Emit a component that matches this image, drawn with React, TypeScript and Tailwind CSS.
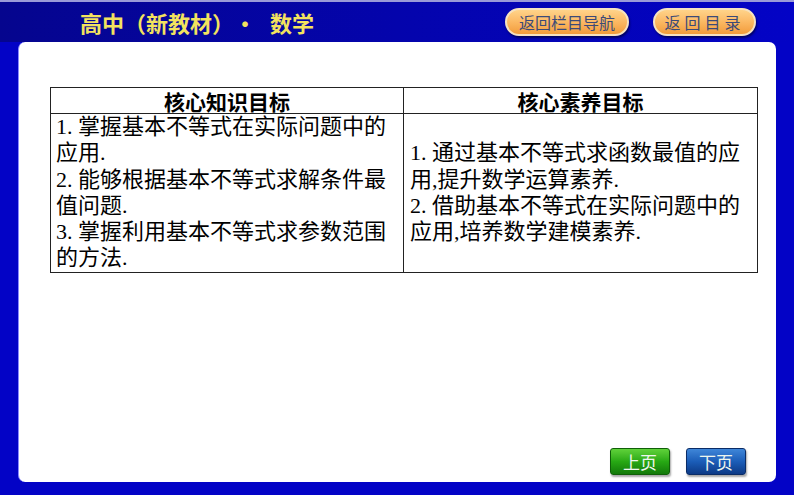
import React from "react";

const cjk = "'Noto Sans CJK SC', 'Noto Sans', sans-serif";
const serif = "'Liberation Serif', 'Noto Sans CJK SC', serif";

function PillButton({ label, w, track }: { label: string; w: string; track: string }) {
  return (
    <div
      className={`${w} ${track} flex h-[28px] items-center justify-center rounded-full border-2 border-[#f6e2c0] bg-gradient-to-b from-[#ffd38a] via-[#fbb862] to-[#f29c3a] text-[16px] text-[#3c4a78] shadow-[1px_2px_2px_rgba(0,0,40,0.6)]`}
      style={{ fontFamily: cjk }}
    >
      {label}
    </div>
  );
}

function PageButton({ label, tone }: { label: string; tone: "green" | "blue" }) {
  const cls =
    tone === "green"
      ? "bg-gradient-to-b from-[#5fd23a] via-[#27a914] to-[#137a0a] border-[#0f5f08]"
      : "bg-gradient-to-b from-[#3f86d8] via-[#1b5db8] to-[#0d3a86] border-[#0a2c66]";
  return (
    <div
      className={`${cls} flex h-[27px] w-[60px] items-center justify-center rounded-[3px] border text-[17px] text-[#eef6ee] shadow-[1px_2px_2px_rgba(0,0,0,0.35)]`}
      style={{ fontFamily: cjk }}
    >
      {label}
    </div>
  );
}

const leftLines = [
  "1. 掌握基本不等式在实际问题中的",
  "应用.",
  "2. 能够根据基本不等式求解条件最",
  "值问题.",
  "3. 掌握利用基本不等式求参数范围",
  "的方法.",
];

const rightLines = [
  "1. 通过基本不等式求函数最值的应",
  "用,提升数学运算素养.",
  "2. 借助基本不等式在实际问题中的",
  "应用,培养数学建模素养.",
];

export default function App() {
  return (
    <div className="flex h-[495px] w-[794px] flex-col overflow-hidden border-t-2 border-[#9a9ad8] bg-[#0303c6]">
      <div className="flex h-[40px] items-center bg-gradient-to-r from-[#05058e] via-[#0404ac] to-[#0303c6]">
        <div
          className="ml-[80px] flex items-center text-[22px] font-bold text-[#f3e35e]"
          style={{ fontFamily: cjk }}
        >
          <span>高中（新教材）</span>
          <span className="mr-[14px]">·</span>
          <span>数学</span>
        </div>
        <div className="ml-auto mr-[38px] flex items-center gap-[24px]">
          <PillButton label="返回栏目导航" w="w-[124px]" track="tracking-[0px]" />
          <PillButton label="返回目录" w="w-[103px]" track="tracking-[4px]" />
        </div>
      </div>

      <div className="mx-[18px] mb-[13px] flex flex-1 flex-col rounded-[7px] border-l border-[#8a8aff] bg-white">
        <div className="ml-[31px] mt-[45px] w-[708px]">
          <table className="w-full border-collapse border border-[#222] text-[22px] text-black">
            <thead>
              <tr className="h-[26px]">
                <th
                  className="w-[353px] border border-[#222] p-0 pt-[1px] text-center text-[21px] font-bold leading-[24px]"
                  style={{ fontFamily: cjk }}
                >
                  核心知识目标
                </th>
                <th
                  className="border border-[#222] p-0 pt-[1px] text-center text-[21px] font-bold leading-[24px]"
                  style={{ fontFamily: cjk }}
                >
                  核心素养目标
                </th>
              </tr>
            </thead>
            <tbody>
              <tr>
                <td
                  className="h-[158px] border border-[#222] px-[5px] py-0 align-middle leading-[26.3px]"
                  style={{ fontFamily: serif }}
                >
                  {leftLines.map((l) => (
                    <div key={l} className="whitespace-nowrap">
                      {l}
                    </div>
                  ))}
                </td>
                <td
                  className="border border-[#222] px-[6px] py-0 align-middle leading-[26.3px]"
                  style={{ fontFamily: serif }}
                >
                  {rightLines.map((l) => (
                    <div key={l} className="whitespace-nowrap">
                      {l}
                    </div>
                  ))}
                </td>
              </tr>
            </tbody>
          </table>
        </div>

        <div className="mb-[7px] mr-[30px] mt-auto flex justify-end gap-[16px]">
          <PageButton label="上页" tone="green" />
          <PageButton label="下页" tone="blue" />
        </div>
      </div>
    </div>
  );
}
